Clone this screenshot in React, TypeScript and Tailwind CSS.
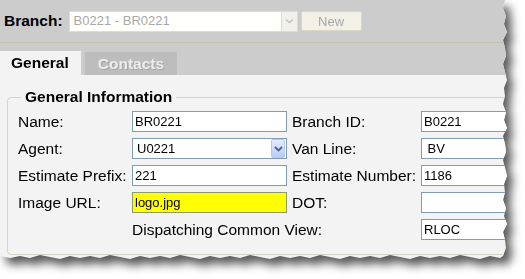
import React from "react";

// torn paper edge, right side and bottom
const tornEdge = () => {
  const right = [505, 503, 506, 504, 507, 503, 505, 506, 503, 505, 507, 504];
  const pts: string[] = ["0px 0px"];
  for (let i = 0; i <= 32; i++) {
    pts.push(`${right[i % right.length]}px ${i * 8}px`);
  }
  const bottom = [258, 256, 259, 257, 255, 258, 256];
  for (let i = 0; i <= 50; i++) {
    const x = 500 - i * 10;
    pts.push(`${Math.max(x, 0)}px ${bottom[i % bottom.length]}px`);
  }
  pts.push("0px 257px");
  return `polygon(${pts.join(", ")})`;
};

const Field = ({ value, yellow }: { value?: string; yellow?: boolean }) => (
  <div
    className={`h-[21px] w-[155px] border flex items-center pl-[2px] text-[13px] text-black ${
      yellow ? "bg-[#ffff00] border-[#8f9a6a]" : "bg-white border-[#7f9db9]"
    }`}
  >
    {value}
  </div>
);

const Label = ({ children }: { children: React.ReactNode }) => (
  <div className="h-[21px] flex items-center text-[15.5px] text-black whitespace-nowrap">
    {children}
  </div>
);

export default function App() {
  return (
    <div className="w-[525px] h-[279px] bg-white overflow-hidden font-['Liberation_Sans',Arial,sans-serif]">
      <div className="drop-shadow-[6px_7px_5px_rgba(0,0,0,0.65)]">
        <div
          className="w-[508px] h-[260px] bg-[#f3f3f3] flex flex-col overflow-hidden"
          style={{ clipPath: tornEdge() }}
        >
          {/* Branch bar */}
          <div className="h-[42px] bg-[#cccccc] flex items-center pl-[4px] shrink-0">
            <span className="text-[15.5px] font-bold text-black">Branch:</span>
            <div className="ml-[6px] w-[229px] h-[21px] flex border border-[#e2ddc8] bg-[#fffffc]">
              <div className="flex-1 flex items-center pl-[4px] text-[13px] text-[#a9a9a9]">
                B0221 - BR0221
              </div>
              <div className="w-[16px] h-full bg-[#f1f0ea] border-l border-[#e2ddc8] flex items-center justify-center">
                <svg width="9" height="6" viewBox="0 0 9 6">
                  <path d="M1 1.5l3.5 3 3.5-3" fill="none" stroke="#c2c2c2" strokeWidth="1.5" />
                </svg>
              </div>
            </div>
            <button className="ml-[3px] w-[61px] h-[20px] bg-[#f3f1e7] border border-[#dcd7c2] rounded-[2px] text-[13px] text-[#a8a8a8]">
              New
            </button>
          </div>
          <div className="h-px bg-[#c9c2aa] shrink-0" />

          {/* Tabs */}
          <div className="h-[32px] bg-[#cccccc] flex items-end shrink-0">
            <div className="w-[81px] h-[24px] bg-[#f3f3f3] pl-[11px] flex items-center text-[15.5px] font-bold text-black">
              General
            </div>
            <div className="ml-[4px] w-[92px] h-[23px] bg-[#bdbdbd] flex items-center justify-center text-[15.5px] font-bold text-[#ececec] [text-shadow:1px_1px_0_#a5a5a5]">
              Contacts
            </div>
          </div>

          {/* General Information */}
          <div className="flex-1 pt-[13px] pl-[7px]">
            <fieldset className="w-[540px] border border-[#d3d3c6] rounded-[4px] pb-[14px]">
              <legend className="ml-[13px] px-[4px] text-[15.5px] font-bold text-black leading-[18px]">
                General Information
              </legend>
              <div className="grid grid-cols-[114px_160px_129px_155px] gap-y-[6px] pl-[10px] pt-[5px]">
                <Label>Name:</Label>
                <Field value="BR0221" />
                <Label>Branch ID:</Label>
                <Field value="B0221" />

                <Label>Agent:</Label>
                <div className="h-[21px] w-[155px] border border-[#7f9db9] bg-white flex items-center">
                  <span className="flex-1 pl-[4px] text-[13px] text-black">U0221</span>
                  <div className="mr-px w-[14px] h-[19px] rounded-[2px] border border-[#b7c9f3] bg-gradient-to-b from-[#e3ebff] to-[#b9cbf7] flex items-center justify-center">
                    <svg width="9" height="6" viewBox="0 0 9 6">
                      <path d="M1 1l3.5 3.5L8 1" fill="none" stroke="#4d6185" strokeWidth="1.8" />
                    </svg>
                  </div>
                </div>
                <Label>Van Line:</Label>
                <Field value={"\u00a0BV"} />

                <Label>Estimate Prefix:</Label>
                <Field value="221" />
                <Label>Estimate Number:</Label>
                <Field value="1186" />

                <Label>Image URL:</Label>
                <Field value="logo.jpg" yellow />
                <Label>DOT:</Label>
                <Field />

                <div />
                <div className="col-span-2">
                  <Label>Dispatching Common View:</Label>
                </div>
                <Field value="RLOC" />
              </div>
            </fieldset>
          </div>
        </div>
      </div>
    </div>
  );
}
